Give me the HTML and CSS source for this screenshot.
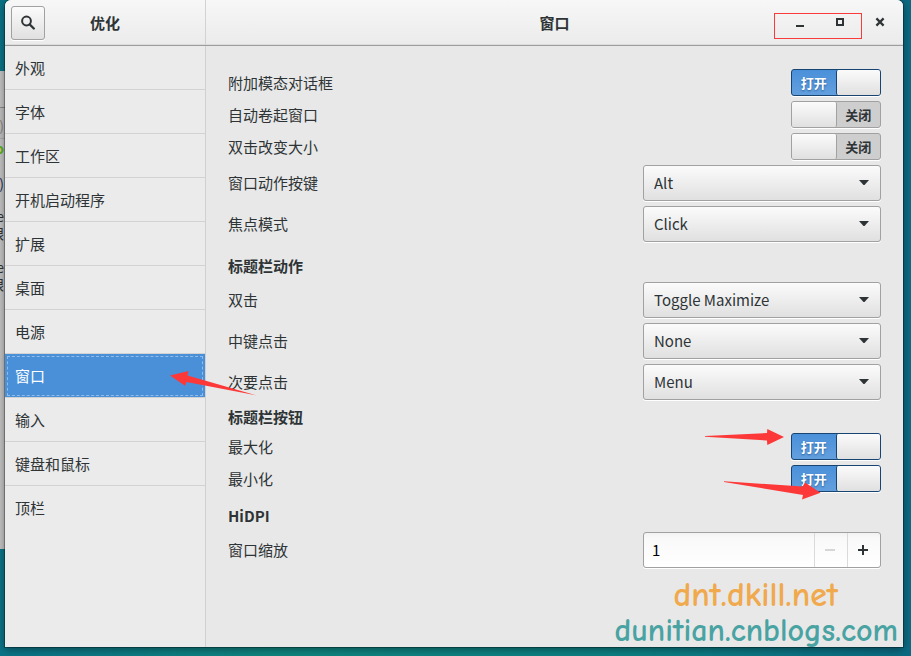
FILE: index.html
```html
<!DOCTYPE html>
<html lang="zh-CN">
<head>
<meta charset="utf-8">
<title>优化</title>
<link rel="stylesheet" href="styles.css">
</head>
<body>
<div class="behind" aria-hidden="true">
  <span class="frag frag-paren">)</span>
  <span class="frag frag-green">o</span>
  <span class="frag frag-navy">)</span>
  <span class="frag frag-a">e</span>
  <span class="frag frag-b">眼</span>
  <span class="frag frag-c">e</span>
  <span class="frag frag-d">眼</span>
</div>
<div class="window">
  <header class="titlebar">
    <div class="titlebar-side">
      <button class="search" type="button" aria-label="搜索">
        <svg width="16" height="16" viewBox="0 0 16 16"><circle cx="6.5" cy="6" r="4.4" fill="none" stroke="#2e3436" stroke-width="2"/><path d="M9.8 9.5l4 4" stroke="#2e3436" stroke-width="2.4" stroke-linecap="round"/></svg>
      </button>
      <h1 class="title">优化</h1>
    </div>
    <div class="titlebar-main">
      <h2 class="title">窗口</h2>
      <div class="controls">
        <button type="button" aria-label="最小化"><svg width="16" height="16" viewBox="0 0 16 16"><path d="M4 11h8v2H4z" fill="#2e3436"/></svg></button>
        <button type="button" aria-label="最大化"><svg width="16" height="16" viewBox="0 0 16 16"><path d="M5 5h6v6H5z" fill="none" stroke="#2e3436" stroke-width="2"/></svg></button>
        <button type="button" aria-label="关闭"><svg width="16" height="16" viewBox="0 0 16 16"><path d="M4.4 4.4l7.2 7.2M11.6 4.4l-7.2 7.2" stroke="#2e3436" stroke-width="2.2"/></svg></button>
      </div>
      <div class="mark-box"></div>
    </div>
  </header>
  <div class="body">
    <nav class="sidebar">
      <a href="#">外观</a>
      <a href="#">字体</a>
      <a href="#">工作区</a>
      <a href="#">开机启动程序</a>
      <a href="#">扩展</a>
      <a href="#">桌面</a>
      <a href="#">电源</a>
      <a href="#" class="selected" aria-current="page">窗口</a>
      <a href="#">输入</a>
      <a href="#">键盘和鼠标</a>
      <a href="#" class="last">顶栏</a>
    </nav>
    <main class="settings">
      <div class="row"><label for="modal">附加模态对话框</label>
        <span class="switch"><input type="checkbox" id="modal" checked><span class="on">打开</span><span class="off">关闭</span></span></div>
      <div class="row"><label for="shade">自动卷起窗口</label>
        <span class="switch"><input type="checkbox" id="shade"><span class="on">打开</span><span class="off">关闭</span></span></div>
      <div class="row"><label for="resize">双击改变大小</label>
        <span class="switch"><input type="checkbox" id="resize"><span class="on">打开</span><span class="off">关闭</span></span></div>
      <div class="row"><label for="action">窗口动作按键</label>
        <span class="combo"><select id="action"><option>Alt</option></select><svg width="10" height="6" viewBox="0 0 10 6"><path d="M0 0h10L6 4.5Q5 5.5 4 4.5z" fill="#2e3436"/></svg></span></div>
      <div class="row"><label for="focus">焦点模式</label>
        <span class="combo"><select id="focus"><option>Click</option></select><svg width="10" height="6" viewBox="0 0 10 6"><path d="M0 0h10L6 4.5Q5 5.5 4 4.5z" fill="#2e3436"/></svg></span></div>
      <h3>标题栏动作</h3>
      <div class="row"><label for="double">双击</label>
        <span class="combo"><select id="double"><option>Toggle Maximize</option></select><svg width="10" height="6" viewBox="0 0 10 6"><path d="M0 0h10L6 4.5Q5 5.5 4 4.5z" fill="#2e3436"/></svg></span></div>
      <div class="row"><label for="middle">中键点击</label>
        <span class="combo"><select id="middle"><option>None</option></select><svg width="10" height="6" viewBox="0 0 10 6"><path d="M0 0h10L6 4.5Q5 5.5 4 4.5z" fill="#2e3436"/></svg></span></div>
      <div class="row"><label for="secondary">次要点击</label>
        <span class="combo"><select id="secondary"><option>Menu</option></select><svg width="10" height="6" viewBox="0 0 10 6"><path d="M0 0h10L6 4.5Q5 5.5 4 4.5z" fill="#2e3436"/></svg></span></div>
      <h3 class="compact">标题栏按钮</h3>
      <div class="row"><label for="max">最大化</label>
        <span class="switch"><input type="checkbox" id="max" checked><span class="on">打开</span><span class="off">关闭</span></span></div>
      <div class="row"><label for="min">最小化</label>
        <span class="switch"><input type="checkbox" id="min" checked><span class="on">打开</span><span class="off">关闭</span></span></div>
      <h3>HiDPI</h3>
      <div class="row"><label for="scale">窗口缩放</label>
        <span class="spin"><input type="text" id="scale" value="1"><button type="button" disabled aria-label="减小"><svg width="10" height="10" viewBox="0 0 10 10"><path d="M0 4h10v2H0z" fill="#d5d6d6"/></svg></button><button type="button" aria-label="增大"><svg width="10" height="10" viewBox="0 0 10 10"><path d="M4 0h2v4h4v2H6v4H4V6H0V4h4z" fill="#2e3436"/></svg></button></span></div>
    </main>
  </div>
  <svg class="arrow arrow-nav" width="88" height="26" viewBox="0 0 88 26"><path d="M0 5.5L18.5 1 17.5 5.5 87 25.5 16.5 12 15 15.7z"/></svg>
  <svg class="arrow arrow-max" width="80" height="18" viewBox="0 0 80 18"><path d="M0 8L62 5 62.3 1 79 9 62.3 17 62 12.5 0 8.8z"/></svg>
  <svg class="arrow arrow-min" width="98" height="20" viewBox="0 0 98 20"><path d="M0 1.2L78.5 6.5 81 2.5 96.5 12.7 78 19.5 79 15 0 2z"/></svg>
  <div class="watermark"><span class="wm-orange">dnt.dkill.net</span><span class="wm-teal">dunitian.cnblogs.com</span></div>
</div>
</body>
</html>
```
FILE: styles.css
```css
* { box-sizing: border-box; }

body {
  margin: 0;
  min-height: 100vh;
  padding: 0 8px 9px 5px;
  display: flex;
  overflow: hidden;
  position: relative;
  background: linear-gradient(90deg, #0b7387, #0f857f 30%, #0d7f83 70%, #0b6a82);
  color: #2e3436;
  font: 15px/20px "Noto Sans CJK SC", "Noto Sans", sans-serif;
}

button, input, select { font: inherit; color: inherit; }
h1, h2, h3 { margin: 0; font-size: 15px; font-weight: bold; }

/* Part of another window showing at the left edge of the desktop */
.behind {
  position: absolute;
  left: 0;
  top: 71px;
  width: 5px;
  height: 478px;
  overflow: hidden;
  background: linear-gradient(#c4c4c4 36px, #888 36px, #888 37px, #c0c0c0 37px, #c0c0c0 67px, #aaa 67px, #aaa 68px, #c4c4c4 68px);
}
.frag { position: absolute; right: 1px; font-size: 14px; line-height: 14px; }
.frag-paren { top: 47px; color: #888; }
.frag-green { top: 70px; color: #5fb313; font-weight: bold; }
.frag-navy { top: 105px; color: #22335c; }
.frag-a { top: 138px; }
.frag-b { top: 155px; }
.frag-c { top: 189px; }
.frag-d { top: 206px; }

.window {
  position: relative;
  flex: 1;
  display: flex;
  flex-direction: column;
  border-radius: 6px 6px 0 0;
  background: #e8e8e8;
  box-shadow: 0 0 0 1px rgba(0, 0, 0, .3), 0 2px 9px rgba(0, 0, 0, .45);
}

.titlebar {
  display: flex;
  height: 46px;
  border-bottom: 1px solid #9d9d9d;
  border-radius: 6px 6px 0 0;
  background: linear-gradient(#f7f7f7, #ebebeb);
  box-shadow: inset 0 -1px #dcdcdc;
}
.titlebar-side {
  width: 201px;
  display: grid;
  grid-template-columns: 40px 1fr 40px;
  align-items: center;
  border-right: 1px solid #d2d2d2;
}
.titlebar-main {
  position: relative;
  flex: 1;
  display: grid;
  grid-template-columns: 1fr auto 1fr;
  align-items: center;
}
.titlebar-main .title { grid-column: 2; }
.title { text-align: center; }
.search {
  width: 34px;
  height: 34px;
  margin-left: 6px;
  padding: 0;
  display: grid;
  place-items: center;
  border: 1px solid #a1a1a1;
  border-radius: 3px;
  background: linear-gradient(#fbfbfb, #e0e0e0);
  box-shadow: 0 1px #fff;
}
.controls {
  display: flex;
  justify-content: flex-end;
  padding-right: 3px;
}
.controls button {
  width: 40px;
  height: 44px;
  padding: 0 0 2px;
  display: grid;
  place-items: center;
  border: 0;
  background: none;
}
.mark-box {
  position: absolute;
  top: 13px;
  right: 41px;
  width: 88px;
  height: 26px;
  border: 1px solid #f83b3b;
  pointer-events: none;
}

.body { flex: 1; display: flex; }
.sidebar {
  width: 201px;
  border-right: 1px solid #d0d0d0;
  background: #ebebeb;
}
.sidebar a {
  display: flex;
  align-items: center;
  height: 44px;
  padding: 0 10px;
  border-bottom: 1px solid #d2d2d2;
  color: inherit;
  text-decoration: none;
}
.sidebar .last { border-bottom: 0; }
.sidebar .selected {
  background: #4a90d9;
  color: #fff;
  outline: 1px dashed #92bce8;
  outline-offset: -3px;
}

.settings {
  flex: 1;
  display: flex;
  flex-direction: column;
  gap: 5px;
  padding: 23px 22px;
}
.row {
  display: flex;
  justify-content: space-between;
  align-items: center;
}
.settings h3 { padding: 9px 0 1px; line-height: 20px; }
.settings .compact { padding-top: 2px; }

.switch {
  position: relative;
  display: flex;
  width: 90px;
  height: 27px;
  border: 1px solid #a1a1a1;
  border-radius: 3px;
  background: #cecece;
  box-shadow: 0 1px #fff;
  font-size: 13px;
  line-height: 25px;
  font-weight: bold;
  text-align: center;
}
.switch input {
  position: absolute;
  inset: 0;
  z-index: 1;
  width: 100%;
  height: 100%;
  margin: 0;
  opacity: 0;
}
.switch span { width: 44px; }
.switch::before {
  content: "";
  width: 44px;
  border-right: 1px solid #a1a1a1;
  border-radius: 2px;
  background: linear-gradient(#fbfbfb, #e0e0e0);
}
.switch .on { display: none; }
.switch:has(:checked) {
  flex-direction: row-reverse;
  border-color: #184472;
  background: linear-gradient(#4a90d9, #639fde);
  color: #fff;
  text-shadow: 0 1px 2px #2a5f99;
}
.switch:has(:checked)::before { border-right: 0; border-left: 1px solid #184472; }
.switch:has(:checked) .on { display: block; }
.switch:has(:checked) .off { display: none; }

.combo {
  position: relative;
  display: flex;
  width: 238px;
}
.combo select {
  appearance: none;
  width: 100%;
  height: 36px;
  padding: 0 10px;
  border: 1px solid #a1a1a1;
  border-radius: 3px;
  background: linear-gradient(#fbfbfb, #e0e0e0);
  box-shadow: 0 1px #fff;
}
.combo svg {
  position: absolute;
  right: 12px;
  top: 15px;
  pointer-events: none;
}

.spin {
  display: flex;
  width: 238px;
  height: 36px;
  border: 1px solid #a1a1a1;
  border-radius: 3px;
  background: linear-gradient(#f2f2f2, #f9f9f9 5px, #fff);
  box-shadow: 0 1px #fff;
}
.spin input {
  flex: 1;
  min-width: 0;
  padding: 0 8px;
  border: 0;
  background: none;
  color: #000;
}
.spin button {
  width: 33px;
  padding: 0 2px 0 0;
  display: grid;
  place-items: center;
  border: 0;
  border-left: 1px solid #dadada;
  background: none;
}

/* Annotations drawn over the window */
.arrow { position: absolute; fill: #fd3838; pointer-events: none; }
.arrow-nav { left: 165px; top: 370px; }
.arrow-max { right: 118px; top: 428px; }
.arrow-min { right: 81px; top: 480px; }
.watermark {
  position: absolute;
  right: 5px;
  bottom: -2px;
  display: flex;
  flex-direction: column;
  align-items: flex-end;
  font: bold 32px/36px "Comic Sans MS", "Comic Neue", Lato, sans-serif;
  pointer-events: none;
}
.wm-orange { padding-right: 60px; font-size: 34px; color: #f0a94c; }
.wm-teal { color: #48a3a2; }
```
